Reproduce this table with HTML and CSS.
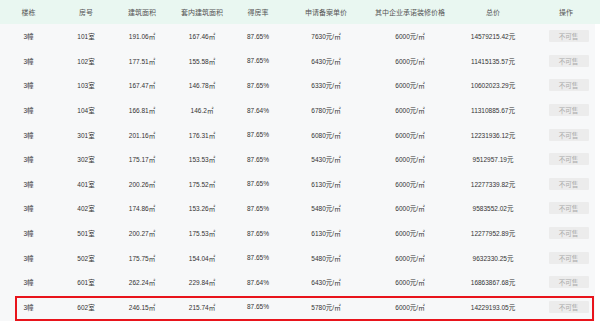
FILE: index.html
```html
<!DOCTYPE html>
<html lang="zh">
<head>
<meta charset="utf-8">
<link rel="stylesheet" href="styles.css">
</head>
<body>
<div class="page">
  <div class="head">
    <div class="row head-row">
      <div>楼栋</div><div>房号</div><div>建筑面积</div><div>套内建筑面积</div><div>得房率</div><div>申请备案单价</div><div>其中企业承诺装修价格</div><div>总价</div><div>操作</div>
    </div>
  </div>
  <div class="body">
    <div class="row"><div>3幢</div><div>101室</div><div>191.06㎡</div><div>167.46㎡</div><div>87.65%</div><div>7630元/㎡</div><div>6000元/㎡</div><div>14579215.42元</div><div><span class="btn">不可售</span></div></div>
    <div class="row"><div>3幢</div><div>102室</div><div>177.51㎡</div><div>155.58㎡</div><div>87.65%</div><div>6430元/㎡</div><div>6000元/㎡</div><div>11415135.57元</div><div><span class="btn">不可售</span></div></div>
    <div class="row"><div>3幢</div><div>103室</div><div>167.47㎡</div><div>146.78㎡</div><div>87.65%</div><div>6330元/㎡</div><div>6000元/㎡</div><div>10602023.29元</div><div><span class="btn">不可售</span></div></div>
    <div class="row"><div>3幢</div><div>104室</div><div>166.81㎡</div><div>146.2㎡</div><div>87.64%</div><div>6780元/㎡</div><div>6000元/㎡</div><div>11310885.67元</div><div><span class="btn">不可售</span></div></div>
    <div class="row"><div>3幢</div><div>301室</div><div>201.16㎡</div><div>176.31㎡</div><div>87.65%</div><div>6080元/㎡</div><div>6000元/㎡</div><div>12231936.12元</div><div><span class="btn">不可售</span></div></div>
    <div class="row"><div>3幢</div><div>302室</div><div>175.17㎡</div><div>153.53㎡</div><div>87.65%</div><div>5430元/㎡</div><div>6000元/㎡</div><div>9512957.19元</div><div><span class="btn">不可售</span></div></div>
    <div class="row"><div>3幢</div><div>401室</div><div>200.26㎡</div><div>175.52㎡</div><div>87.65%</div><div>6130元/㎡</div><div>6000元/㎡</div><div>12277339.82元</div><div><span class="btn">不可售</span></div></div>
    <div class="row"><div>3幢</div><div>402室</div><div>174.86㎡</div><div>153.26㎡</div><div>87.65%</div><div>5480元/㎡</div><div>6000元/㎡</div><div>9583552.02元</div><div><span class="btn">不可售</span></div></div>
    <div class="row"><div>3幢</div><div>501室</div><div>200.27㎡</div><div>175.53㎡</div><div>87.65%</div><div>6130元/㎡</div><div>6000元/㎡</div><div>12277952.89元</div><div><span class="btn">不可售</span></div></div>
    <div class="row"><div>3幢</div><div>502室</div><div>175.75㎡</div><div>154.04㎡</div><div>87.65%</div><div>5480元/㎡</div><div>6000元/㎡</div><div>9632330.25元</div><div><span class="btn">不可售</span></div></div>
    <div class="row"><div>3幢</div><div>601室</div><div>262.24㎡</div><div>229.84㎡</div><div>87.64%</div><div>6430元/㎡</div><div>6000元/㎡</div><div>16863867.68元</div><div><span class="btn">不可售</span></div></div>
    <div class="row"><div>3幢</div><div>602室</div><div>246.15㎡</div><div>215.74㎡</div><div>87.65%</div><div>5780元/㎡</div><div>6000元/㎡</div><div>14229193.05元</div><div><span class="btn">不可售</span></div></div>
  </div>
  <div class="mark"></div>
</div>
</body>
</html>
```

FILE: styles.css
```css
html, body {
  margin: 0;
  padding: 0;
  background: #ffffff;
}
.page {
  position: relative;
  width: 600px;
  height: 328px;
  font-family: "Liberation Sans", "Noto Sans CJK SC", sans-serif;
}
.head {
  width: 600px;
  height: 24px;
  background: #e9f7f1;
}
.row {
  display: grid;
  grid-template-columns: 57px 58px 54px 66px 46px 90px 78px 88px 58px;
  align-items: center;
  height: 24.6px;
  font-size: 6.5px;
  color: #333333;
}
.row > div {
  text-align: center;
  white-space: nowrap;
}
.head-row {
  height: 24px;
  font-size: 7px;
  color: #555555;
  font-family: "Noto Sans CJK SC", sans-serif;
}
.body {
  width: 595px;
  height: 297px;
  background: #f7f8f9;
}
.btn {
  display: inline-block;
  width: 40px;
  height: 12px;
  line-height: 12px;
  margin-left: 5px;
  background: #ececec;
  color: #aaaaaa;
  font-size: 6.5px;
  border-radius: 1px;
  font-family: "Noto Sans CJK SC", sans-serif;
}
.mark {
  position: absolute;
  left: 15px;
  top: 296px;
  width: 575px;
  height: 21px;
  border: 2px solid #e8141b;
}
```
